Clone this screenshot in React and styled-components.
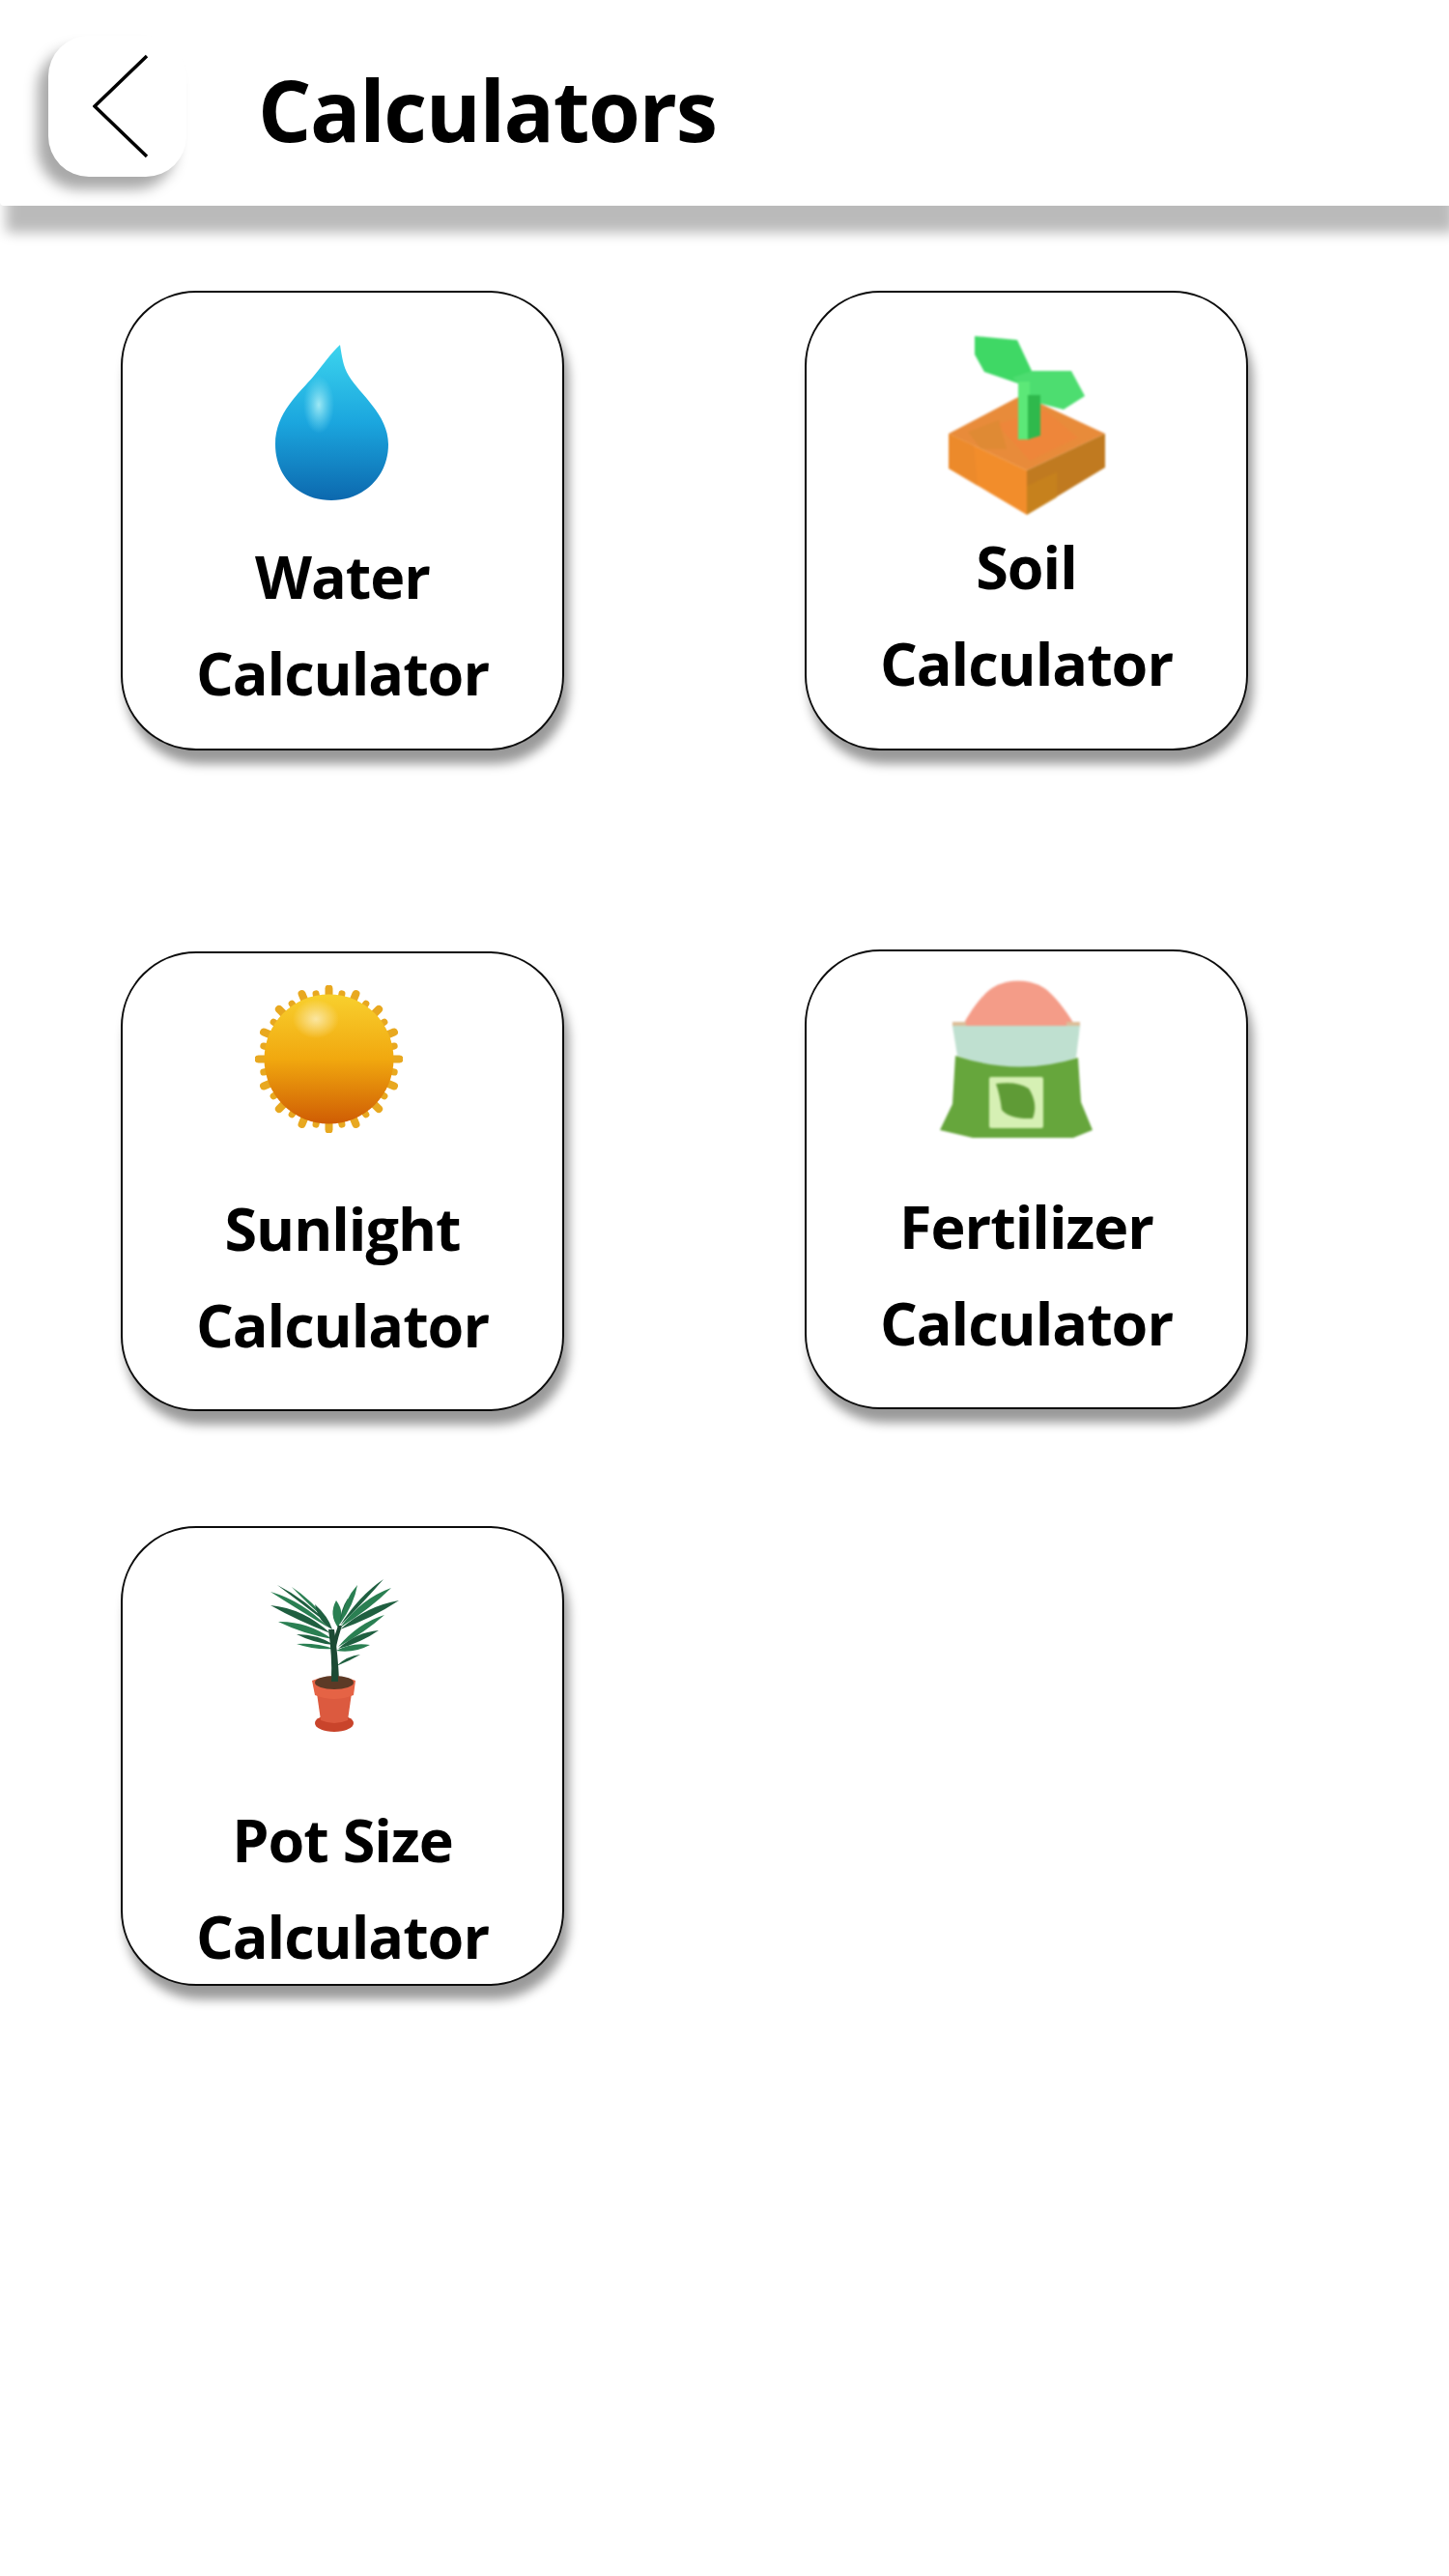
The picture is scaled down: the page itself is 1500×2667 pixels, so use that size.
import React from 'react';
import styled, { createGlobalStyle } from 'styled-components';

const GlobalStyle = createGlobalStyle`
  html, body {
    margin: 0;
    background: #fff;
  }
  body {
    font-family: "Open Sans", "Noto Sans", sans-serif;
    color: #000;
  }
`;

const Page = styled.div`
  width: 1500px;
  height: 2667px;
  overflow: hidden;
  background: #fff;
`;

const Header = styled.header`
  display: flex;
  align-items: flex-start;
  gap: 74px;
  box-sizing: border-box;
  height: 213px;
  padding: 37px 0 0 50px;
  background: #fff;
  border-bottom-left-radius: 4px;
  box-shadow: 6px 28px 13px rgba(0, 0, 0, 0.27);
`;

const BackButton = styled.button`
  display: flex;
  align-items: center;
  justify-content: flex-start;
  box-sizing: border-box;
  width: 143px;
  height: 146px;
  padding: 0 0 0 46px;
  border: 0;
  border-radius: 42px;
  background: #fff;
  box-shadow: -11px 13px 14px rgba(0, 0, 0, 0.34);
`;

const Title = styled.h1`
  margin: 0;
  font-size: 87px;
  font-weight: 700;
  line-height: 152px;
  letter-spacing: -1.4px;
`;

const Rows = styled.main`
  padding: 88px 0 0 125px;
`;

const Row = styled.div`
  display: flex;
  align-items: flex-start;
  gap: 249px;
  margin-top: ${(p) => p.$gap || 0}px;
`;

const Card = styled.div`
  box-sizing: border-box;
  width: 459px;
  height: 476px;
  margin-top: ${(p) => (p.$lift ? -p.$lift : 0)}px;
  border: 2px solid #0c0c0c;
  border-radius: 78px;
  background: #fff;
  box-shadow: 5px 14px 11px rgba(0, 0, 0, 0.4);
`;

const IconSlot = styled.div`
  display: flex;
  justify-content: center;
  align-items: flex-start;
  box-sizing: border-box;
  height: ${(p) => p.$height}px;
  padding-top: ${(p) => p.$top}px;
  padding-right: ${(p) => p.$shift || 0}px;

  svg {
    filter: blur(${(p) => p.$soft || 0}px);
  }
`;

const Label = styled.div`
  font-size: 61px;
  font-weight: 700;
  line-height: 100px;
  letter-spacing: -1px;
  text-align: center;
`;

const DropIcon = () => (
  <svg width="117" height="161" viewBox="0 0 117 161">
    <defs>
      <linearGradient id="dropFill" x1="0" y1="0" x2="0" y2="1">
        <stop offset="0" stopColor="#3cd4ee" />
        <stop offset="0.5" stopColor="#1ba6de" />
        <stop offset="1" stopColor="#0c68ae" />
      </linearGradient>
      <radialGradient id="dropShine">
        <stop offset="0" stopColor="#a5ecf6" stopOpacity="0.95" />
        <stop offset="1" stopColor="#7fdff2" stopOpacity="0" />
      </radialGradient>
    </defs>
    <path
      d="M67 0 C69 12 70 22 76 32 C88 52 117 72 117 103 C117 137 91 161 58 161 C25 161 0 137 0 103 C0 70 25 50 40 32 C50 20 58 8 67 0Z"
      fill="url(#dropFill)"
    />
    <ellipse cx="45" cy="62" rx="16" ry="30" fill="url(#dropShine)" />
  </svg>
);

const SoilIcon = () => (
  <svg width="162" height="186" viewBox="0 0 162 186">
    <polygon points="0,102 76,62 162,102 81,140" fill="#e88b3a" />
    <polygon points="50,92 100,78 134,106 84,130" fill="#f1853a" opacity="0.7" />
    <polygon points="20,100 52,88 60,118 34,118" fill="#d98a30" opacity="0.6" />
    <polygon points="0,102 81,140 81,186 0,138" fill="#f28d2b" />
    <polygon points="0,102 26,114 30,156 0,138" fill="#e8882c" opacity="0.6" />
    <polygon points="162,102 81,140 81,186 162,137" fill="#c07a20" />
    <polygon points="81,156 81,186 112,168 112,142" fill="#c9841c" opacity="0.7" />
    <polygon points="27,1 71,5 86,37 72,50 37,38 27,20" fill="#3fd865" />
    <polygon points="66,44 86,37 127,37 141,63 119,77 92,70 84,62" fill="#4ddd70" />
    <polygon points="72,48 84,48 84,108 72,108" fill="#5ce878" />
    <polygon points="82,62 95,62 95,104 82,108" fill="#2fb94c" />
  </svg>
);

const sunRays = Array.from({ length: 32 }, (_, i) => {
  const angle = (i * Math.PI) / 16;
  const outer = i % 2 === 0 ? 73 : 69;
  return {
    x1: 76.5 + Math.cos(angle) * 60,
    y1: 76.5 + Math.sin(angle) * 60,
    x2: 76.5 + Math.cos(angle) * outer,
    y2: 76.5 + Math.sin(angle) * outer,
    short: i % 2 === 1,
  };
});

const SunIcon = () => (
  <svg width="153" height="153" viewBox="0 0 153 153">
    <defs>
      <linearGradient id="sunFill" x1="0" y1="0" x2="0" y2="1">
        <stop offset="0" stopColor="#f8d02e" />
        <stop offset="0.5" stopColor="#f1a80f" />
        <stop offset="1" stopColor="#cf5c04" />
      </linearGradient>
      <radialGradient id="sunShine">
        <stop offset="0" stopColor="#fbe8a8" stopOpacity="0.95" />
        <stop offset="1" stopColor="#fbe8a8" stopOpacity="0" />
      </radialGradient>
    </defs>
    {sunRays.map((ray) => (
      <line
        key={`${ray.x2}-${ray.y2}`}
        x1={ray.x1}
        y1={ray.y1}
        x2={ray.x2}
        y2={ray.y2}
        stroke="#e8a820"
        strokeWidth={ray.short ? 7 : 8}
        strokeLinecap="round"
      />
    ))}
    <circle cx="76.5" cy="76.5" r="67" fill="url(#sunFill)" />
    <ellipse cx="63" cy="35" rx="24" ry="20" fill="url(#sunShine)" />
  </svg>
);

const FertilizerIcon = () => (
  <svg width="158" height="163" viewBox="0 0 158 163">
    <path d="M22 50 C30 34 40 20 50 11 C66 -3 96 -3 112 11 C124 22 132 34 142 50Z" fill="#f49c88" />
    <rect x="13" y="43" width="14" height="5" fill="#dcbd98" />
    <rect x="131" y="43" width="14" height="5" fill="#dcbd98" />
    <path d="M13 47 L145 47 L141 80 Q81 104 18 78Z" fill="#bfe0d0" />
    <path
      d="M16 78 Q81 100 143 80 L146 126 L158 155 L138 163 L34 163 L0 155 L13 128Z"
      fill="#66a63c"
    />
    <rect x="51" y="100" width="56" height="53" rx="2" fill="#d6f0b4" />
    <path d="M58 107 Q80 104 92 112 Q102 128 96 143 Q72 144 64 134 Q62 118 58 107Z" fill="#5f9b36" />
  </svg>
);

// base x, base y, tip x, tip y, half width, sag
const palmLeaves = [
  [60, 50, 0, 13, 5, 5],
  [62, 48, 7, 6, 3, 4],
  [60, 44, 22, 8, 3, 2],
  [62, 56, 0, 27, 7, 5],
  [64, 62, 8, 44, 7, 3],
  [66, 68, 27, 57, 5, 1],
  [66, 72, 27, 67, 4, 0],
  [64, 52, 46, 26, 6, -3],
  [70, 50, 68, 22, 9, 0],
  [72, 46, 80, 20, 4, 0],
  [72, 46, 90, 6, 6, 2],
  [72, 48, 117, 0, 4, 4],
  [72, 50, 125, 9, 7, 4],
  [72, 52, 133, 22, 7, 3],
  [70, 70, 118, 37, 6, 3],
  [70, 72, 112, 53, 6, 2],
  [68, 74, 103, 68, 6, 0],
  [68, 90, 93, 78, 3, 2],
];

const leafPath = ([bx, by, tx, ty, w, sag]) => {
  const dx = tx - bx;
  const dy = ty - by;
  const len = Math.hypot(dx, dy);
  const nx = (-dy / len) * w;
  const ny = (dx / len) * w;
  const mx = (bx + tx) / 2;
  const my = (by + ty) / 2 - sag;
  return `M${bx} ${by} Q${mx + nx} ${my + ny} ${tx} ${ty} Q${mx - nx} ${my - ny} ${bx} ${by}Z`;
};

const PalmIcon = () => (
  <svg width="133" height="158" viewBox="0 0 133 158">
    {palmLeaves.map((leaf, i) => (
      <path key={leaf.join('-')} d={leafPath(leaf)} fill={i % 2 ? '#1f5f40' : '#2a7f52'} />
    ))}
    <path d="M63 104 Q64 80 60 52 L66 52 Q70 80 71 104Z" fill="#1c4a34" />
    <path d="M68 70 Q70 60 74 48 L70 48 Q66 58 64 70Z" fill="#1c4a34" />
    <ellipse cx="66" cy="149" rx="20" ry="9" fill="#c9442b" />
    <path d="M48 118 L84 118 L80 146 Q66 152 52 146Z" fill="#dc5a3f" />
    <path d="M43 105 Q66 96 88 105 L86 120 Q66 128 46 120Z" fill="#e56345" />
    <ellipse cx="66" cy="107" rx="20" ry="7" fill="#5c3a26" />
    <path d="M63 106 L64 92 L70 92 L70 106Z" fill="#1c4a34" />
  </svg>
);

const Calculator = ({ name, icon: Icon, slot, top, shift, lift, soft }) => (
  <Card $lift={lift}>
    <IconSlot $height={slot} $top={top} $shift={shift} $soft={soft}>
      <Icon />
    </IconSlot>
    <Label>
      {name}
      <br />
      Calculator
    </Label>
  </Card>
);

const App = () => (
  <Page>
    <GlobalStyle />
    <Header>
      <BackButton aria-label="Back">
        <svg width="60" height="108" viewBox="0 0 60 108">
          <polyline points="56,2 2,54 56,106" fill="none" stroke="#000" strokeWidth="3.5" />
        </svg>
      </BackButton>
      <Title>Calculators</Title>
    </Header>
    <Rows>
      <Row>
        <Calculator name="Water" icon={DropIcon} slot={244} top={54} shift={22} />
        <Calculator name="Soil" icon={SoilIcon} slot={234} top={44} soft={0.8} />
      </Row>
      <Row $gap={208}>
        <Calculator name="Sunlight" icon={SunIcon} slot={235} top={33} shift={28} />
        <Calculator name="Fertilizer" icon={FertilizerIcon} slot={235} top={30} shift={22} lift={2} soft={0.8} />
      </Row>
      <Row $gap={119}>
        <Calculator name="Pot Size" icon={PalmIcon} slot={273} top={53} shift={17} />
      </Row>
    </Rows>
  </Page>
);

export default App;
